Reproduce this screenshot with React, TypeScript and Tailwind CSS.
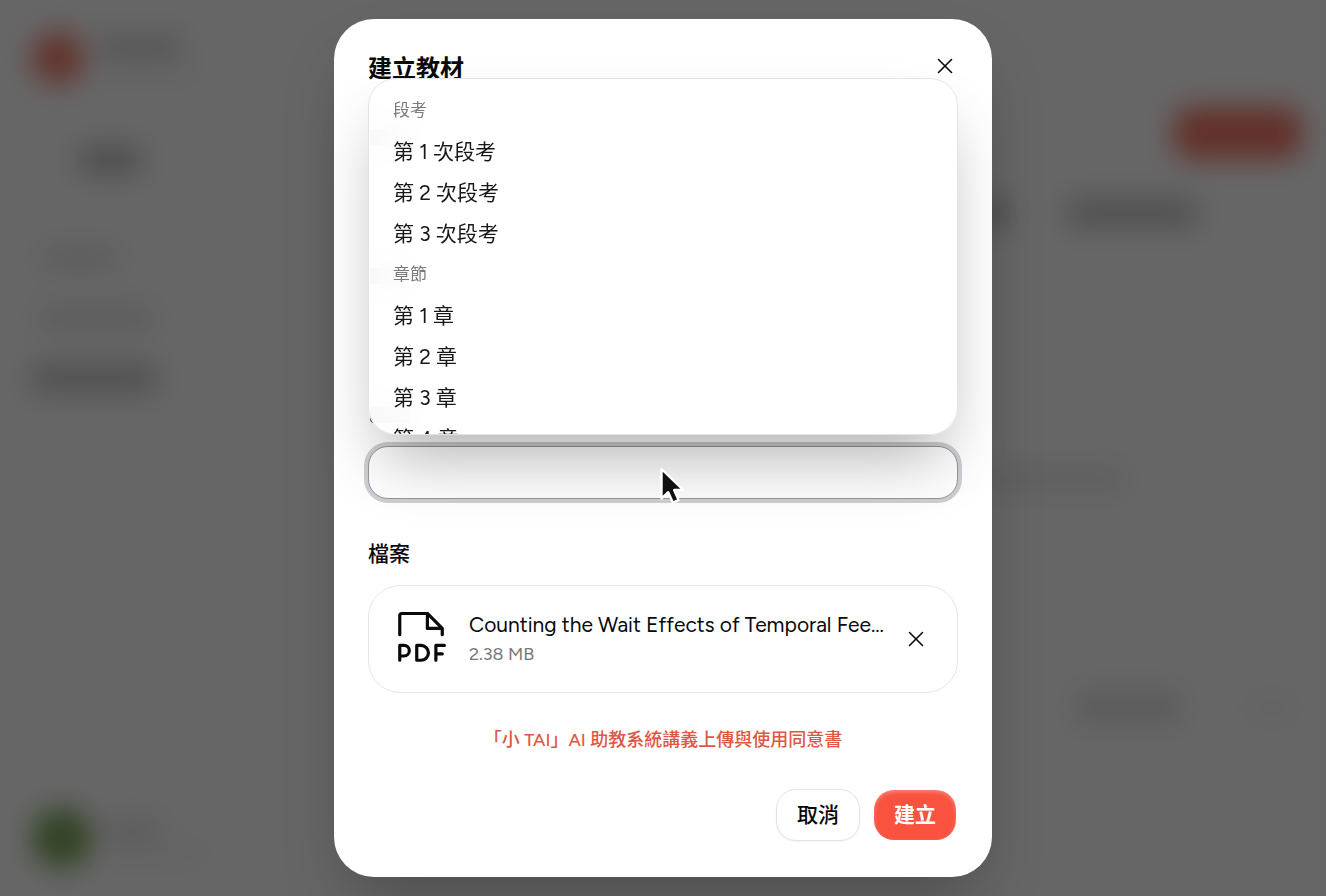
import { X } from "lucide-react";
import { PiFilePdfLight } from "react-icons/pi";

const groups = [
  { label: "段考", options: ["第 1 次段考", "第 2 次段考", "第 3 次段考"] },
  { label: "章節", options: ["第 1 章", "第 2 章", "第 3 章", "第 4 章"] },
];

function PageBehind() {
  return (
    <div aria-hidden="true" className="absolute inset-0 overflow-hidden bg-white">
      <div className="flex h-full justify-between blur-[14px]">
        <div className="flex w-[300px] flex-col px-8 pt-8 pb-7">
          <div className="flex gap-4">
            <div className="size-13 rounded-full bg-[#f4503c]/75" />
            <div className="mt-1 flex flex-col gap-2">
              <div className="h-5 w-20 bg-black/18" />
              <div className="h-3 w-24 bg-black/5" />
            </div>
          </div>
          <div className="mt-16 ml-12 h-6 w-15 bg-black/28" />
          <div className="mt-19 ml-3 h-5 w-18 bg-black/12" />
          <div className="mt-10 ml-2 h-5 w-28 bg-black/12" />
          <div className="mt-9 h-7 w-31 bg-black/22" />
          <div className="mt-auto flex gap-4">
            <div className="size-15 rounded-full bg-[#64983c]/85" />
            <div className="mt-3 flex flex-col gap-2">
              <div className="h-5 w-13 bg-black/12" />
              <div className="h-3 w-24 bg-black/5" />
            </div>
          </div>
        </div>
        <div className="flex w-[346px] flex-col pt-[107px]">
          <div className="mr-6 h-13 w-32 self-end rounded-2xl bg-[#f5604f]/85" />
          <div className="mt-10 flex gap-16">
            <div className="h-7 w-6 bg-black/35" />
            <div className="h-7 w-32 bg-black/22" />
          </div>
          <div className="mt-60 h-6 w-36 bg-black/8" />
          <div className="mt-50 ml-24 flex gap-16">
            <div className="h-8 w-26 bg-black/11" />
            <div className="h-8 w-14 bg-black/2" />
          </div>
        </div>
      </div>
      <div className="absolute inset-0 bg-black/60" />
    </div>
  );
}

function CoveredLabel() {
  return (
    <div aria-hidden="true" className="flex h-[30px] items-center px-0.5">
      <div className="h-4 w-10 rounded-sm bg-black/60" />
    </div>
  );
}

function CoveredField({ value = false }: { value?: boolean }) {
  return (
    <div aria-hidden="true">
      <CoveredLabel />
      <div className="mt-4 flex h-[53px] items-center justify-end gap-50 rounded-[20px] px-5">
        {value && <div className="h-4 w-40 bg-black/10" />}
        <div className="h-3 w-8 bg-black/15" />
      </div>
    </div>
  );
}

function ChapterList() {
  return (
    <div
      id="chapter-list"
      role="listbox"
      aria-label="章節"
      className="absolute inset-x-0 bottom-full mb-[11px] h-[357px] overflow-hidden rounded-[28px] border border-[#e4e4e4] bg-white/93 px-6 pt-[11px] shadow-[0_36px_64px_-14px_rgba(0,0,0,0.3)] backdrop-blur-[20px]"
    >
      {groups.map((group) => (
        <div key={group.label} role="group" aria-label={group.label}>
          <div className="h-[41px] text-[17px] leading-[41px] text-[#7b7b7f]">{group.label}</div>
          {group.options.map((option) => (
            <div
              key={option}
              role="option"
              aria-selected="false"
              className="h-[41px] text-[21px] leading-[41px] text-[#18181b]"
            >
              {option}
            </div>
          ))}
        </div>
      ))}
    </div>
  );
}

function Pointer() {
  return (
    <svg
      aria-hidden="true"
      viewBox="0 0 28 40"
      className="pointer-events-none absolute top-[19px] left-1/2 -ml-1 h-10 w-7"
    >
      <path
        d="M2.5 4 V33.5 L9.2 27.2 L13.8 37.6 L19.6 35 L15.1 25 H24.2 Z"
        fill="#111"
        stroke="#fff"
        strokeWidth="2.4"
        strokeLinejoin="round"
      />
    </svg>
  );
}

export default function App() {
  return (
    <div className="relative min-h-screen font-[Figtree,Inter,'Noto_Sans_CJK_TC',sans-serif] text-[#09090b]">
      <PageBehind />
      <div className="relative flex min-h-screen items-center justify-center py-[19px]">
        <div
          role="dialog"
          aria-modal="true"
          aria-labelledby="dialog-title"
          className="w-full max-w-[658px] rounded-[40px] bg-white px-[34px] pt-[34px] pb-9 shadow-[0_32px_64px_-15px_rgba(0,0,0,0.25)]"
        >
          <div className="flex h-[29px] items-start justify-between">
            <h2 id="dialog-title" className="text-[24px] leading-[32px] font-semibold">
              建立教材
            </h2>
            <button type="button" aria-label="關閉" className="flex size-[26px] items-center justify-center">
              <X className="size-[26px]" strokeWidth={1.5} />
            </button>
          </div>

          <form className="mt-10 flex flex-col gap-10" onSubmit={(e) => e.preventDefault()}>
            <CoveredField value />
            <CoveredField />
            <div>
              <CoveredLabel />
              <div className="relative mt-4">
                <input
                  type="text"
                  role="combobox"
                  aria-label="章節"
                  aria-expanded="true"
                  aria-controls="chapter-list"
                  className="block h-[53px] w-full rounded-[20px] border border-[#96969b] bg-white px-5 text-[21px] ring-4 ring-[#cfcfd3] outline-none"
                />
                <ChapterList />
                <Pointer />
              </div>
            </div>

            <div>
              <h3 className="text-[21px] leading-[30px] font-medium">檔案</h3>
              <div className="mt-4 flex h-[108px] items-center rounded-[32px] border border-[#e6e6e8] pr-7 pl-[18px]">
                <PiFilePdfLight className="size-17 shrink-0" aria-hidden="true" />
                <div className="ml-3.5 min-w-0 flex-1">
                  <div className="truncate text-[21px] leading-[30px]">
                    Counting the Wait Effects of Temporal Fee...
                  </div>
                  <div className="text-[18px] leading-[28px] text-[#77777b]">2.38 MB</div>
                </div>
                <button
                  type="button"
                  aria-label="移除檔案"
                  className="flex size-[26px] shrink-0 items-center justify-center"
                >
                  <X className="size-[26px]" strokeWidth={1.5} />
                </button>
              </div>
              <div className="mt-[34px] text-center text-[18px] leading-[26px] font-medium">
                <a href="#consent" className="text-[#df5644]">
                  「小 TAI」AI 助教系統講義上傳與使用同意書
                </a>
              </div>
              <div className="mt-9 flex items-center justify-end gap-3.5 pr-0.5">
                <button
                  type="button"
                  className="h-[52px] rounded-[20px] border border-[#e4e4e7] bg-white px-5 text-[21px] font-medium shadow-xs"
                >
                  取消
                </button>
                <button
                  type="submit"
                  className="h-[50px] rounded-[20px] bg-[#f9523f] px-5 text-[21px] font-semibold text-white shadow-[inset_0_2px_4px_rgba(255,255,255,0.3)]"
                >
                  建立
                </button>
              </div>
            </div>
          </form>
        </div>
      </div>
    </div>
  );
}
